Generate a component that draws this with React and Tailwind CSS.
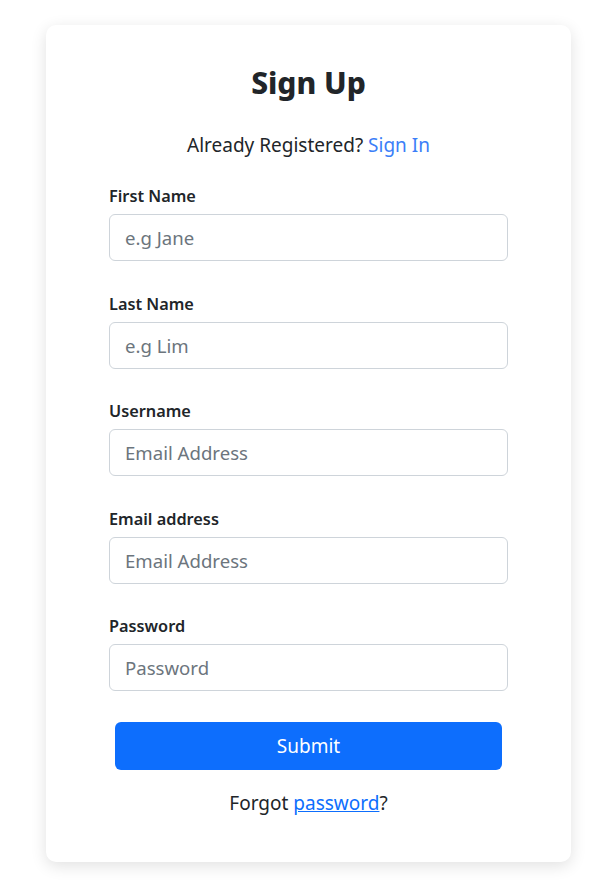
export default function App() {
  const fields = [
    { label: "First Name", ph: "e.g Jane" },
    { label: "Last Name", ph: "e.g Lim" },
    { label: "Username", ph: "Email Address" },
    { label: "Email address", ph: "Email Address" },
    { label: "Password", ph: "Password", type: "password" },
  ];
  return (
    <div className="min-h-[880px] bg-white pt-[25px] text-[#212529]" style={{ fontFamily: '"Noto Sans", sans-serif' }}>
      <div className="ml-[46px] w-[525px] rounded-[10px] bg-white shadow-[0_4px_16px_rgba(0,0,0,0.12)] px-[63px] pt-[40px] pb-[44px]">
        <h1 className="text-center text-[30px] font-extrabold leading-[36px]">Sign Up</h1>
        <p className="mt-[29px] text-center text-[19px] leading-[30px]">
          Already Registered? <a className="text-[#3b7ef8]">Sign In</a>
        </p>
        <div className="mt-[24px] flex flex-col gap-[30.5px]">
          {fields.map((f) => (
            <div key={f.label} className="flex flex-col">
              <label className="text-[16.3px] font-semibold leading-[24px]">{f.label}</label>
              <input
                type={f.type || "text"}
                placeholder={f.ph}
                className="mt-[6px] h-[47px] w-full rounded-[6px] border border-[#ced4da] px-[15px] text-[18.6px] placeholder:text-[#6c757d] outline-none"
              />
            </div>
          ))}
        </div>
        <div className="mt-[31px] px-[6px]">
          <button className="h-[48px] w-full rounded-[6px] bg-[#0d6efd] text-[19px] text-white">Submit</button>
        </div>
        <p className="mt-[18px] text-center text-[19px] leading-[30px]">
          Forgot <a className="text-[#0d6efd] underline">password</a>?
        </p>
      </div>
    </div>
  );
}
